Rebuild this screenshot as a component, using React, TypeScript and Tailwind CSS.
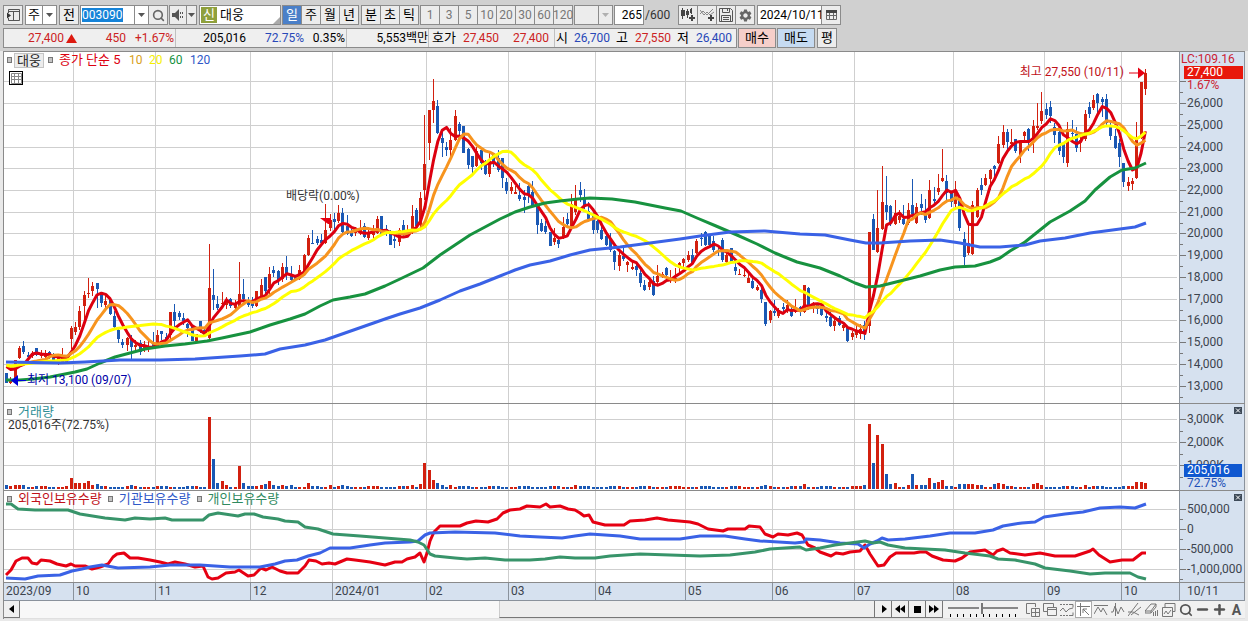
import type { ReactNode } from 'react';
import { clsx } from 'clsx';
import { Minus, Plus, Search } from 'lucide-react';
import { MdSettings } from 'react-icons/md';

const PLOT_LEFT = 4;
const PLOT_WIDTH = 1175;
const FIRST_X = 6.5;
const STEP = 4.314;

// One entry per trading day: direction, then high, body top, body bottom and low on the y scale of the plot
const CANDLES = `
b373,373,383,383 r377,379,383,384 r360,360,382,383 r346,348,358,359 b341,346,352,354 b352,355,357,358 r351,353,356,358 b348,348,355,356
r350,353,356,358 r350,355,357,359 b351,352,357,359 b353,355,362,363 r355,357,362,365 r348,357,362,363 r355,357,363,363 r326,328,339,349
r322,327,332,335 r306,311,327,330 r291,295,306,324 r278,293,294,298 r282,286,291,296 b283,283,289,308 b292,292,303,307 r296,301,305,310
b299,300,314,315 b311,316,327,329 b328,330,339,343 b339,342,345,348 r337,338,345,351 b335,338,347,360 r340,345,347,352 b340,343,352,355
r341,346,348,352 r341,346,348,352 b332,343,347,348 r330,335,346,347 b331,331,334,340 b333,337,340,344 r312,312,335,339 b304,312,321,330
b311,313,317,320 b313,318,321,325 b323,324,328,337 b325,327,341,341 r334,334,341,341 b321,321,330,333 b328,330,336,337 r244,288,338,341
b269,295,300,310 b296,304,308,310 r292,303,304,308 r297,300,305,309 b298,299,306,308 r300,304,308,309 r262,294,307,308 b279,294,299,301
b297,300,305,307 b297,300,306,308 r291,291,306,307 r279,285,298,300 b277,277,291,294 r267,274,288,297 b266,270,273,277 b270,271,280,285
r263,267,279,282 b256,267,275,280 b266,275,280,281 b275,277,280,281 r265,270,279,280 r254,255,275,276 r235,238,255,256 b230,243,244,244
b236,239,243,245 b234,240,243,244 r204,230,243,244 r214,220,228,231 b213,219,222,233 r205,213,221,223 b208,213,232,234 b215,226,234,235
b229,231,236,237 r227,230,233,236 r220,229,233,235 b223,226,237,238 r229,233,238,240 r225,231,235,239 r216,219,233,234 b216,216,234,236
b225,229,234,236 b230,234,245,245 b235,239,241,248 r228,230,242,246 b220,225,235,236 r225,230,234,235 r205,216,232,234 b208,210,226,228
r192,198,225,227 r115,164,190,200 r110,110,143,160 r79,101,110,123 b100,106,133,134 b132,138,143,157 b142,147,150,156 r128,140,150,156
r110,116,140,141 b122,124,131,137 b126,126,153,153 b148,149,165,169 b156,156,167,173 r147,151,166,167 b147,150,163,170 b160,163,174,175
r153,161,174,177 b153,155,162,167 b150,158,170,172 b158,158,178,188 b178,182,191,194 r182,187,191,194 r186,192,194,194 b183,195,199,201
b190,197,200,213 b185,186,195,203 b181,192,206,207 b204,205,225,234 b219,223,231,232 b221,226,232,234 b232,232,246,246 r228,238,242,245
b238,240,244,248 r217,227,238,239 b213,219,224,228 r194,204,227,229 r185,198,212,215 b182,190,195,202 b189,198,207,209 b202,211,219,221
b213,213,230,234 b220,221,230,233 b225,230,239,240 b233,236,245,246 b233,239,250,252 b250,251,262,270 r252,255,266,271 b247,256,259,261
r261,262,265,272 r261,267,269,270 b264,266,270,276 b270,273,283,287 b280,285,290,291 r279,282,287,290 b276,281,295,296 r265,276,282,284
r272,274,276,278 b267,268,275,281 r270,279,281,283 r268,278,281,283 r262,263,268,274 r258,259,263,269 r251,255,260,262 b249,255,263,265
r239,241,253,254 b233,238,239,246 b231,232,245,246 b234,235,245,246 b236,241,250,252 b246,250,251,256 b238,240,260,262 r250,255,262,263
b248,248,263,264 b261,267,271,275 r269,274,275,275 r267,275,276,277 r273,278,283,283 b277,281,288,289 r285,287,290,291 b288,290,299,303
b302,302,324,326 r310,311,320,323 b300,311,313,316 r308,310,316,318 b303,307,309,314 r300,305,309,313 b305,311,316,317 r299,310,312,313
b306,307,312,316 r285,285,312,313 b287,288,309,310 r302,304,307,313 b303,304,309,314 b305,308,315,316 b311,316,318,322 b311,317,326,327
r319,321,326,331 b316,318,325,326 r322,325,328,331 b326,327,341,342 r331,333,337,340 r326,331,335,338 r324,329,334,339 b321,325,333,340
r232,232,326,333 b214,219,250,250 r190,228,252,253 r166,202,229,230 b176,205,212,220 b205,206,222,226 r200,213,224,225 r210,216,220,223
b205,219,224,225 r203,210,223,225 b179,205,214,220 r203,207,223,224 b194,204,208,215 b199,212,220,223 r180,190,218,219 b187,199,201,203
r174,188,192,195 r149,178,181,182 b175,181,193,200 b191,193,202,207 r181,191,204,207 b197,199,228,231 b232,239,257,266 r225,243,253,255
r201,205,254,255 r188,190,217,218 b178,185,190,195 r174,178,185,186 r169,170,179,190 b165,166,169,178 r136,144,163,164 r125,132,145,148
b129,132,142,150 r129,142,144,146 b139,139,151,153 r140,141,155,163 r131,132,136,140 b128,129,142,151 r120,126,139,153 r103,126,128,130
r92,111,121,124 b103,109,115,119 b101,107,116,123 b123,127,135,143 b129,132,151,155 b143,144,157,163 r122,129,163,167 b120,133,134,140
b127,134,148,152 r137,140,142,152 r110,114,139,141 b102,107,114,118 r95,100,108,110 b93,94,103,117 b97,99,102,117 b94,99,123,125
b121,125,136,140 b129,136,148,149 b139,143,157,167 b163,163,182,187 r177,182,186,191 r178,181,184,190 r122,138,178,179 r82,82,138,139
r69,73,89,95`
  .trim()
  .split(/\s+/)
  .map((item) => {
    const [high, top, bottom, low] = item.slice(1).split(',').map(Number);
    return { up: item[0] === 'r', high, top, bottom, low };
  });

const VOLUMES: Record<number, number> = {
  0: 4, 2: 4, 3: 4, 4: 4, 15: 11, 16: 6, 17: 6, 18: 6, 19: 8, 20: 4, 21: 5, 29: 4, 47: 72, 48: 30, 49: 6, 50: 8, 51: 4,
  54: 23, 55: 6, 59: 4, 60: 5, 61: 8, 62: 4, 64: 4, 66: 4, 70: 6, 75: 4, 78: 4, 94: 4, 96: 5, 97: 26, 98: 19, 99: 9, 100: 6,
  101: 4, 103: 4, 132: 4, 175: 3, 176: 4, 185: 5, 199: 4, 200: 65, 201: 26, 202: 54, 203: 45, 204: 15, 205: 5, 206: 6,
  209: 4, 210: 15, 211: 4, 212: 4, 213: 4, 214: 11, 215: 6, 216: 7, 217: 9, 221: 5, 222: 5, 223: 5, 224: 5, 225: 4, 226: 4,
  229: 5, 230: 6, 231: 5, 238: 5, 239: 6, 240: 4, 250: 4, 262: 7, 263: 7, 264: 6,
};

const MA60 =
  '6,380 20,380 33,379 50,377 60,375 75,372 87,369 100,363 115,357 130,353 145,349 165,346 185,344 207,341 222,338 250,332 270,325 290,319 305,314 320,306 333,300 350,297 365,294 385,286 400,279 423,268 440,255 455,245 470,235 485,227 500,219 515,212 530,207 545,203 560,201 578,199 590,198 612,199 635,202 650,205 665,208 681,211 697,218 716,226 737,235 757,244 775,253 797,262 820,268 840,276 855,283 866,287 880,286 900,281 920,276 940,270 955,267 975,266 990,262 1000,258 1010,251 1025,242 1040,230 1050,222 1070,211 1085,201 1095,190 1110,177 1122,170 1135,168 1146,163';
const MA120 =
  '6,362 60,363 85,362 120,360 160,360 195,359 240,356 265,354 280,349 305,345 325,340 345,333 365,326 385,319 400,314 420,308 440,300 460,291 480,284 500,276 515,270 530,265 550,261 570,255 590,250 620,247 650,243 680,239 700,236 730,232 765,231 800,234 825,235 850,240 866,243 880,243 910,241 940,240 960,243 980,247 1000,247 1025,245 1040,241 1065,238 1090,233 1120,229 1135,227 1146,223';
const FOREIGN =
  '6,575 11,570 16,561 22,558 28,558 32,563 37,564 41,560 50,561 57,564 66,566 71,564 75,566 85,566 92,569 100,567 108,564 113,557 117,554 124,553 130,558 138,558 150,560 160,562 168,564 175,562 185,564 195,567 203,566 208,577 212,579 218,578 226,573 235,572 239,570 248,576 254,575 261,568 266,570 272,567 280,571 287,573 298,573 305,566 309,560 316,561 322,564 329,563 335,564 347,559 355,560 370,562 385,565 395,562 402,562 407,559 415,557 420,553 424,562 427,553 430,541 434,532 440,526 460,526 467,523 476,521 488,522 497,519 503,513 510,510 520,509 527,506 540,507 546,504 550,507 560,506 568,509 575,510 580,513 584,516 589,515 593,522 605,525 624,525 630,521 645,520 657,518 668,520 690,522 698,524 708,529 723,531 728,529 745,529 749,526 760,527 765,534 773,537 778,534 788,535 797,533 802,535 808,545 815,548 820,552 831,556 836,553 843,554 850,552 860,551 865,545 870,554 878,566 884,565 890,557 896,553 914,553 920,552 926,552 932,556 943,560 955,561 962,558 970,552 985,550 993,555 997,551 1003,549 1010,553 1025,555 1040,553 1055,556 1075,556 1090,551 1093,549 1099,555 1110,562 1122,560 1133,560 1142,553 1146,553';
const INSTITUTION =
  '6,578 25,579 38,576 60,575 72,571 82,569 90,567 102,565 118,568 150,567 170,565 200,565 230,567 260,567 275,564 285,561 297,560 308,556 320,553 330,548 350,548 370,545 385,543 410,542 418,541 425,535 430,533 455,532 495,533 520,536 540,537 562,538 575,536 590,534 620,536 640,539 680,539 700,536 725,536 745,539 760,541 795,543 804,542 806,539 820,540 840,543 858,544 864,548 870,544 877,541 882,538 888,540 905,539 930,536 950,533 975,533 993,530 1003,526 1015,524 1022,523 1035,522 1044,517 1065,514 1083,512 1100,508 1120,507 1135,508 1146,504';
const INDIVIDUAL =
  '6,504 11,504 18,509 35,510 68,510 80,514 105,518 125,520 135,518 150,519 165,518 172,520 203,520 209,515 218,513 238,516 245,514 254,514 263,517 278,519 285,521 298,522 305,527 318,529 333,534 360,536 385,538 410,540 418,542 424,545 430,554 435,556 455,558 467,559 485,558 505,560 530,560 545,559 560,557 575,558 595,558 610,556 640,554 700,556 730,555 755,552 770,549 800,547 806,550 820,548 835,545 850,543 865,541 873,543 880,542 888,545 905,548 945,550 965,553 990,556 998,559 1015,560 1035,564 1045,568 1070,571 1090,574 1105,573 1130,573 1138,577 1146,579';

const MONTHS = [
  { label: '2023/09', x: 4 },
  { label: '10', x: 73 },
  { label: '11', x: 155 },
  { label: '12', x: 250 },
  { label: '2024/01', x: 332 },
  { label: '02', x: 426 },
  { label: '03', x: 508 },
  { label: '04', x: 595 },
  { label: '05', x: 685 },
  { label: '06', x: 772 },
  { label: '07', x: 854 },
  { label: '08', x: 953 },
  { label: '09', x: 1044 },
  { label: '10', x: 1121 },
];

const PRICE_GRID = [81, 103, 125, 147, 168, 190, 212, 233, 255, 277, 299, 320, 342, 364, 386];
const VOLUME_GRID = [419, 442, 465];
const HOLDER_GRID = [509, 529, 549, 569];

// closing prices before the first visible day, needed to start the averages
const EARLIER = Array.from({ length: 20 }, (_, i) => 368 - (i % 5) - Math.floor(i / 5));

function movingAverage(days: number) {
  const closes = [...EARLIER, ...CANDLES.map((c) => (c.up ? c.top : c.bottom))];
  return CANDLES.map((_, i) => {
    const slice = closes.slice(i + EARLIER.length - days + 1, i + EARLIER.length + 1);
    const mean = slice.reduce((sum, v) => sum + v, 0) / days;
    return `${(FIRST_X + i * STEP).toFixed(1)},${mean.toFixed(1)}`;
  }).join(' ');
}

interface LineProps {
  points: string;
  color: string;
}

function Line({ points, color }: LineProps) {
  return <polyline points={points} fill="none" stroke={color} strokeWidth={3} strokeLinejoin="round" vectorEffect="non-scaling-stroke" />;
}

interface PlotProps {
  top: number;
  height: number;
  grid: number[];
  label: string;
  children: ReactNode;
}

function Plot({ top, height, grid, label, children }: PlotProps) {
  return (
    <svg
      role="img"
      aria-label={label}
      viewBox={`${PLOT_LEFT} ${top} ${PLOT_WIDTH} ${height}`}
      height={height}
      preserveAspectRatio="none"
      className="block w-full"
    >
      <g fill="#cfcfcf">
        {grid.map((y) => (
          <rect key={y} x={4} y={y} width={1173} height={1} />
        ))}
        {MONTHS.slice(1).map((m) => (
          <rect key={m.x} x={m.x} y={top} width={1} height={height} />
        ))}
      </g>
      {children}
    </svg>
  );
}

interface AxisProps {
  top: number;
  height: number;
  grid: number[];
  labels: string[];
  children?: ReactNode;
}

function Axis({ top, height, grid, labels, children }: AxisProps) {
  const gap = grid[1] - grid[0];
  return (
    <div className="relative w-[66px] shrink-0 border-x border-[#8a929c] bg-[#d6e1ef]">
      <svg viewBox={`0 ${top} 64 ${height}`} width={64} height={height} className="block">
        {grid.map((y, i) => (
          <g key={y}>
            <rect x={0} y={y} width={6} height={1} fill="#777" />
            <rect x={0} y={y + Math.round(gap / 2)} width={3} height={1} fill="#777" />
            <text x={7} y={y + 4} fill="#3c444e" className="text-[12px]">
              {labels[i]}
            </text>
          </g>
        ))}
      </svg>
      {children}
    </div>
  );
}

function CloseBox() {
  return (
    <button aria-label="닫기" className="absolute top-[3px] right-[2px] flex h-[7px] w-2 items-center justify-center bg-[#3e4a58]">
      <svg width="6" height="5" viewBox="0 0 6 5" stroke="#fff">
        <path d="M1 .5 5 4.5M5 .5 1 4.5" />
      </svg>
    </button>
  );
}

function Marker() {
  return <span className="inline-block h-[6px] w-[5px] shrink-0 border border-[#777] bg-[#c4c4c4]" />;
}

function Caret({ muted }: { muted?: boolean }) {
  return (
    <svg width="7" height="4" viewBox="0 0 7 4" fill={muted ? '#b0b0b0' : '#555'}>
      <path d="M0 0h7L3.500 4z" />
    </svg>
  );
}

interface ToolButtonProps {
  children: ReactNode;
  label?: string;
  className?: string;
}

function ToolButton({ children, label, className }: ToolButtonProps) {
  return (
    <button
      aria-label={label}
      className={clsx('-ml-px flex h-5 shrink-0 items-center justify-center border border-[#8b8b8b]', className ?? 'w-5 bg-[#ececec]')}
    >
      {children}
    </button>
  );
}

function Toolbar() {
  return (
    <div className="flex h-5 items-center gap-px pl-1 text-[13px]">
      <ToolButton label="패널 열기">
        <svg width="14" height="14" viewBox="0 0 14 14" fill="none" stroke="#555">
          <path d="M2.5 5V1.500h11v11h-11V10M2.500 3.500h11M7.500 3.500v9" />
          <path d="M1 4.500 5 7.500 1 10.500z" fill="#333" stroke="none" />
        </svg>
      </ToolButton>
      <div className="ml-[2px] flex">
        <ToolButton className="w-[18px] bg-white">주</ToolButton>
        <ToolButton label="종목 구분" className="w-[15px] bg-white"><Caret /></ToolButton>
      </div>
      <div className="ml-[2px] flex">
        <ToolButton>전</ToolButton>
      </div>
      <div className="flex text-[12px]">
        <div className="flex h-5 w-[55px] items-center border border-[#8b8b8b] bg-white pl-px">
          <input aria-label="종목코드" defaultValue="003090" className="h-[14px] w-[41px] bg-[#1583d8] text-white outline-none" />
        </div>
        <ToolButton label="최근 종목" className="w-[15px] bg-white"><Caret /></ToolButton>
        <ToolButton label="종목 검색"><Search size={13} color="#666" strokeWidth={3} /></ToolButton>
      </div>
      <div className="ml-px flex">
        <ToolButton label="소리" className="w-[18px] bg-[#ececec]">
          <svg width="13" height="12" viewBox="0 0 13 12" fill="#555">
            <path d="M0 4h3l4-4v12L3 8H0zM8 3h1v2H8zM10 3h1v2h-1zM8 7h1v2H8zM10 7h1v2h-1z" />
          </svg>
        </ToolButton>
        <ToolButton label="소리 설정" className="w-[11px] bg-[#ececec]"><Caret /></ToolButton>
      </div>
      <div className="relative ml-px flex h-5 w-[82px] items-center gap-[3px] border border-[#8b8b8b] bg-white pl-px">
        <span className="flex h-4 w-4 items-center justify-center bg-[#8fa03c] text-white">신</span>
        <span>대웅</span>
        <svg width="7" height="7" className="absolute right-0 bottom-0" fill="#aaa">
          <path d="M7 0v7H0z" />
        </svg>
      </div>
      <div className="ml-px flex">
        <ToolButton className="w-5 bg-[#4a7fc8] text-white">일</ToolButton>
        <ToolButton>주</ToolButton>
        <ToolButton>월</ToolButton>
        <ToolButton>년</ToolButton>
      </div>
      <div className="ml-[2px] flex">
        <ToolButton>분</ToolButton>
        <ToolButton>초</ToolButton>
        <ToolButton>틱</ToolButton>
      </div>
      <div className="ml-px flex text-[12px] text-[#777]">
        {['1', '3', '5', '10', '20', '30', '60', '120'].map((n) => (
          <ToolButton key={n}>{n}</ToolButton>
        ))}
      </div>
      <div className="ml-px flex">
        <ToolButton label="분 단위" className="w-[25px] bg-[#ececec]">{null}</ToolButton>
        <ToolButton label="분 단위 선택" className="w-[15px] bg-[#ececec]"><Caret muted /></ToolButton>
      </div>
      <input
        aria-label="봉 개수"
        defaultValue="265"
        className="h-5 w-[30px] border border-[#8b8b8b] bg-white pr-px text-right text-[12px] outline-none"
      />
      <span className="w-[33px] text-[12px] text-[#333]">/600</span>
      <div className="flex">
        <ToolButton label="캔들 추가">
          <svg width="15" height="14" viewBox="0 0 15 14" fill="#444">
            <path d="M0 2h4v6H0zM1 0h1v11H1zM5 3h3v4H5zM6 1h1v9H6zM9 1h2v4H9zM10 0h1v6h-1zM10 7h2v2h2v2h-2v2h-2v-2H8V9h2z" />
          </svg>
        </ToolButton>
        <ToolButton label="지표 추가">
          <svg width="15" height="14" viewBox="0 0 15 14" fill="none" stroke="#888">
            <path d="M0 6l3-3 4 4 6-6M0 2l4 5 3-3 3 3 4-3" />
            <path d="M10 7h2v2h2v2h-2v2h-2v-2H8V9h2z" fill="#444" stroke="none" />
          </svg>
        </ToolButton>
        <ToolButton label="저장">
          <svg width="14" height="14" viewBox="0 0 14 14" fill="none" stroke="#555">
            <path d="M.5 .5h11l2 2v11H.5zM3.500 .5v4h7v-4M8.500 1v2M2.500 13.500v-6h9v6M4 9.500h6M4 11.500h6" />
          </svg>
        </ToolButton>
        <ToolButton label="설정"><MdSettings size={15} color="#666" /></ToolButton>
      </div>
      <div className="ml-px flex text-[12px]">
        <input
          aria-label="날짜"
          defaultValue="2024/10/11"
          className="h-5 w-[65px] border border-[#8b8b8b] bg-white pl-[2px] outline-none"
        />
        <ToolButton label="달력">
          <svg width="11" height="10" viewBox="0 0 11 10" fill="none" stroke="#666">
            <path d="M.5 1.500h10v8H.5zM.5 5.500h10M3.500 3v6M7.500 3v6" />
            <path d="M0 0h11v3H0z" fill="#444" stroke="none" />
          </svg>
        </ToolButton>
      </div>
    </div>
  );
}

function QuoteBar() {
  return (
    <div className="mt-[3px] flex h-5 items-center pl-[3px] text-[12px]">
      <div className="flex h-5 items-center border border-[#8b8b8b] bg-[#efefef] text-right leading-[18px]">
        <div className="flex w-[172px] items-center border-r border-[#c0c0c0] text-[#cc2222]">
          <span className="w-[60px]">27,400</span>
          <svg width="12" height="9" className="ml-[2px]" fill="#dd1a10">
            <path d="M5.500 0 11 9H0z" />
          </svg>
          <span className="w-12">450</span>
          <span className="w-12">+1.67%</span>
        </div>
        <div className="flex w-[171px] border-r border-[#c0c0c0]">
          <span className="w-[70px]">205,016</span>
          <span className="w-[58px] text-[#2848b8]">72.75%</span>
          <span className="w-[41px]">0.35%</span>
        </div>
        <div className="w-[82px] border-r border-[#c0c0c0]">5,553백만</div>
        <div className="flex w-[126px] border-r border-[#c0c0c0] text-[#cc2222]">
          <span className="w-[27px] text-[13px] text-black">호가</span>
          <span className="w-[43px]">27,450</span>
          <span className="w-[50px]">27,400</span>
        </div>
        <div className="flex w-[181px] text-[#2848b8]">
          <span className="w-[13px] text-[13px] text-black">시</span>
          <span className="w-[42px]">26,700</span>
          <span className="w-[18px] text-[13px] text-black">고</span>
          <span className="w-[43px] text-[#cc2222]">27,550</span>
          <span className="w-[18px] text-[13px] text-black">저</span>
          <span className="w-[43px]">26,400</span>
        </div>
      </div>
      <button className="ml-px h-5 w-[38px] border border-[#8b8b8b] bg-[#f6cfca] text-[13px] leading-[18px]">매수</button>
      <button className="ml-px h-5 w-[38px] border border-[#8b8b8b] bg-[#c6dbf2] text-[13px] leading-[18px]">매도</button>
      <button className="ml-[2px] h-5 w-5 border border-[#8b8b8b] bg-[#ececec] text-[13px] leading-[18px]">평</button>
    </div>
  );
}

function PricePanel() {
  return (
    <section className="flex border-b border-[#8a8a8a]">
      <div className="relative min-w-0 flex-1">
        <Plot top={52} height={351} grid={PRICE_GRID} label="주가 차트">
          <g shapeRendering="crispEdges">
            {CANDLES.map((c, i) => {
              const x = Math.round(FIRST_X + i * STEP - 0.5);
              return (
                <g key={i} fill={c.up ? '#d2200f' : '#1a58b4'}>
                  <rect x={x} y={c.high} width={1} height={c.low - c.high} />
                  <rect x={x - 1} y={c.top} width={3} height={Math.max(1, c.bottom - c.top)} />
                </g>
              );
            })}
          </g>
          <Line points={movingAverage(5)} color="#dc0010" />
          <Line points={movingAverage(10)} color="#f7941e" />
          <Line points={movingAverage(20)} color="#ffff00" />
          <Line points={MA60} color="#17923f" />
          <Line points={MA120} color="#3a62e6" />
          <path d="M1129 72.500h9v-5l7 5.500-7 5.500v-5h-9z" fill="#e60012" />
          <path d="M320 218h11v6h-3z" fill="#e60012" />
          <path d="M11 380.500 18 375v5h8v1h-8v5z" fill="#0000d8" />
        </Plot>
        <div className="absolute top-0 left-0 flex h-4 items-center pl-[3px] text-[#dc0010]">
          <Marker />
          <button className="ml-[2px] h-[15px] border border-[#c4c4c4] bg-[#ececec] px-[2px] text-[13px] leading-[13px] text-[#222]">대웅</button>
          <span className="mr-[6px] ml-1 flex"><Marker /></span>
          <span className="w-[70px] text-[13px]">종가 단순 5</span>
          <span className="w-5 text-[#d8a020]">10</span>
          <span className="w-5 text-[#f5f000]">20</span>
          <span className="w-[21px] text-[#17923f]">60</span>
          <span className="text-[#2f58c8]">120</span>
        </div>
        <button aria-label="표 보기" className="absolute top-[19px] left-[5px] flex h-[14px] w-[14px] items-center justify-center border border-black bg-white">
          <svg width="11" height="11" viewBox="0 0 11 11" fill="none" stroke="#888">
            <path d="M.5 .5h10v10H.5zM.5 3.500h10M.5 6.500h10M3.500 .5v10M7.500 .5v10" />
          </svg>
        </button>
        <span className="absolute top-[12px] right-[55px] leading-4 text-[#c01018]">최고 27,550 (10/11)</span>
        <span className="absolute top-[136px] left-[24%] leading-4 text-[#333]">배당락(0.00%)</span>
        <span className="absolute top-[320px] left-[23px] leading-4 text-[#0000a8]">최저 13,100 (09/07)</span>
      </div>
      <Axis
        top={52}
        height={351}
        grid={PRICE_GRID}
        labels={['', '26,000', '25,000', '24,000', '23,000', '22,000', '21,000', '20,000', '19,000', '18,000', '17,000', '16,000', '15,000', '14,000', '13,000']}
      >
        <div className="absolute top-0 left-px w-[62px] text-[#cc2233]">
          <div className="h-[14px] leading-[14px]">LC:109.16</div>
          <div className="ml-[3px] h-[13px] bg-[#e8180c] pl-[3px] leading-[13px] text-white">27,400</div>
          <div className="pl-[6px] leading-[13px]">1.67%</div>
        </div>
      </Axis>
    </section>
  );
}

function VolumePanel() {
  return (
    <section className="flex border-b border-[#8a8a8a]">
      <div className="relative min-w-0 flex-1">
        <Plot top={404} height={86} grid={VOLUME_GRID} label="거래량 차트">
          <g shapeRendering="crispEdges">
            {CANDLES.map((c, i) => {
              const h = VOLUMES[i] ?? (i % 7 < 3 ? 3 : 2);
              const x = Math.round(FIRST_X + i * STEP - 1.5);
              return <rect key={i} x={x} y={489 - h} width={3} height={h} fill={c.up ? '#d2200f' : '#1a58b4'} />;
            })}
          </g>
        </Plot>
        <div className="absolute top-0 left-0 pl-[3px] leading-[14px] text-[#333]">
          <div className="flex items-center gap-[6px] pt-px text-[13px] text-[#2f8f96]">
            <Marker />
            거래량
          </div>
          <div className="pl-px leading-[13px]">205,016주(72.75%)</div>
        </div>
      </div>
      <Axis top={404} height={86} grid={VOLUME_GRID} labels={['3,000K', '2,000K', '1,000K']}>
        <CloseBox />
        <div className="absolute top-[60px] left-1 w-[58px] text-[#1c50b8]">
          <div className="h-[13px] bg-[#1058d0] pl-[3px] leading-[13px] text-white">205,016</div>
          <div className="pl-[3px] leading-[13px]">72.75%</div>
        </div>
      </Axis>
    </section>
  );
}

function HolderPanel() {
  return (
    <section className="flex border-b border-[#8a8a8a]">
      <div className="relative min-w-0 flex-1">
        <Plot top={491} height={91} grid={HOLDER_GRID} label="투자자별 보유수량 차트">
          <Line points={FOREIGN} color="#e60012" />
          <Line points={INSTITUTION} color="#3a62e6" />
          <Line points={INDIVIDUAL} color="#38946a" />
        </Plot>
        <div className="absolute top-0 left-0 flex h-4 items-center gap-[6px] pl-[3px] text-[13px]">
          <Marker />
          <span className="text-[#c01018]">외국인보유수량</span>
          <Marker />
          <span className="text-[#2f58c8]">기관보유수량</span>
          <Marker />
          <span className="text-[#2f8a60]">개인보유수량</span>
        </div>
      </div>
      <Axis top={491} height={91} grid={HOLDER_GRID} labels={['500,000', '0', '-500,000', '-1,000,000']}>
        <CloseBox />
      </Axis>
    </section>
  );
}

function DateAxis() {
  return (
    <div className="flex h-[18px] border-b border-[#8a929c] bg-[#d6e1ef] leading-4 text-[#3c444e]">
      <div className="flex min-w-0 flex-1">
        {MONTHS.map((m, i) => {
          const end = i + 1 < MONTHS.length ? MONTHS[i + 1].x : PLOT_LEFT + PLOT_WIDTH;
          return (
            <span
              key={m.x}
              className={clsx('box-border pl-[2px]', i > 0 && 'border-l border-[#8a929c]')}
              style={{ width: `${((end - m.x) / PLOT_WIDTH) * 100}%` }}
            >
              {m.label}
            </span>
          );
        })}
      </div>
      <span className="w-[66px] shrink-0 border-x border-[#8a929c] pl-[7px]">10/11</span>
    </div>
  );
}

const PLAYBACK = [
  { label: '재생', path: 'M5 2l5 4-5 4z' },
  { label: '뒤로', path: 'M6 2v8L1 6zM11 2v8L6 6z' },
  { label: '정지', path: 'M3 3h7v7H3z' },
  { label: '앞으로', path: 'M1 2l5 4-5 4zM6 2l5 4-5 4z' },
];

const DRAW_TOOLS = [
  { label: '차트 추가', path: 'M9.500 4V.5h-9v10H4M5.500 5.500h8v8h-8zM5.500 9.500h8M9.500 5.500v8' },
  { label: '창 분할', path: 'M4 8.500H.5v-8h10V4M4.500 4.500h9v8h-9zM4.500 6.500h9' },
  { label: '영역', path: 'M0 1.500h2m1 0h2m1 0h2m1 0h4v3M0 12.500h2m1 0h2m1 0h2m1 0h4v-3M0 8l3-3 3 4 3-3 4-1' },
  { label: '십자선', path: 'M0 3.500h13M3.500 0v13M6 6l6 6M6 10V6h4' },
  { label: '고저', path: 'M0 2.500h14M0 11l4-7 3 5 2-4 4 7' },
  { label: '파동', path: 'M4.500 0v13M0 9h2l2-6 3 8 3-7 3 5' },
  { label: '추세선', path: 'M0 13 10 0M3 12l10-8M0 9h5l6 3' },
  { label: '지우개', path: 'M0 8l6-7h5l-5 7zM0 8v2h6V8M6 10l5-6V1M8.500 9v4M10.500 8v5M12.500 7v6' },
  { label: '차트 겹치기', path: 'M3 4V.5h10v8h-2M.5 4.500h10v9H.5zM2 11l2-3 2 3 3-4' },
];

function BottomBar() {
  return (
    <div className="flex h-[18px] items-center border-b border-[#e0e0e0] bg-[#f1f1f1]">
      <button aria-label="왼쪽으로" className="flex h-[17px] w-4 items-center justify-center border-r border-b border-[#777] bg-[#f0f0f0]">
        <svg width="5" height="8"><path d="M5 0v8L0 4z" /></svg>
      </button>
      <div className="flex h-[17px] flex-1 justify-end bg-[#f8f8f8]">
        <div className="w-[44%] border-r border-b border-l border-[#777] border-l-[#ccc] bg-[#eeeeee]" />
      </div>
      {PLAYBACK.map((p) => (
        <button key={p.label} aria-label={p.label} className="flex h-[17px] w-[17px] items-center justify-center border-r border-b border-[#777] bg-[#f0f0f0]">
          <svg width="12" height="12"><path d={p.path} /></svg>
        </button>
      ))}
      <div className="ml-[5px] flex w-[70px] flex-col">
        <input
          type="range"
          aria-label="재생 속도"
          defaultValue={47}
          className="h-3 w-full appearance-none bg-[linear-gradient(#888,#888)] bg-[length:100%_2px] bg-center bg-no-repeat [&::-webkit-slider-thumb]:h-[11px] [&::-webkit-slider-thumb]:w-1 [&::-webkit-slider-thumb]:appearance-none [&::-webkit-slider-thumb]:border-r-2 [&::-webkit-slider-thumb]:border-[#777] [&::-webkit-slider-thumb]:bg-[#f1f1f1]"
        />
        <div className="flex justify-between px-[2px]">
          {Array.from({ length: 11 }, (_, i) => (
            <span key={i} className="h-[3px] w-px bg-black" />
          ))}
        </div>
      </div>
      <div className="ml-[6px] flex w-[221px] items-center text-[#555]">
        {DRAW_TOOLS.map((t) => (
          <button
            key={t.label}
            aria-label={t.label}
            className={clsx('flex h-[17px] w-[17px] items-center justify-center', t.label === '십자선' && 'border border-[#aaa] bg-white')}
          >
            <svg width="14" height="14" viewBox="0 0 14 14" fill="none" stroke="#777"><path d={t.path} /></svg>
          </button>
        ))}
        <button aria-label="돋보기" className="flex w-[17px] justify-center"><Search size={14} strokeWidth={3} /></button>
        <button aria-label="축소" className="flex w-[17px] justify-center"><Minus size={15} strokeWidth={4} /></button>
        <button aria-label="확대" className="flex w-[17px] justify-center"><Plus size={15} strokeWidth={4} /></button>
        <button className="w-[17px] text-center text-[14px] font-bold">A</button>
      </div>
    </div>
  );
}

export default function App() {
  return (
    <main className="min-h-[621px] overflow-hidden bg-[#e9e9e9] font-[Roboto,'Liberation_Sans','Noto_Sans_CJK_KR',sans-serif] text-[12px] leading-4 whitespace-nowrap text-black">
      <header className="h-[51px] bg-[#d0d0d0] pt-[5px]">
        <Toolbar />
        <QuoteBar />
      </header>
      <div className="mr-[3px] ml-[3px] border-t border-l border-[#8a8a8a] bg-white">
        <PricePanel />
        <VolumePanel />
        <HolderPanel />
        <DateAxis />
        <BottomBar />
      </div>
    </main>
  );
}
